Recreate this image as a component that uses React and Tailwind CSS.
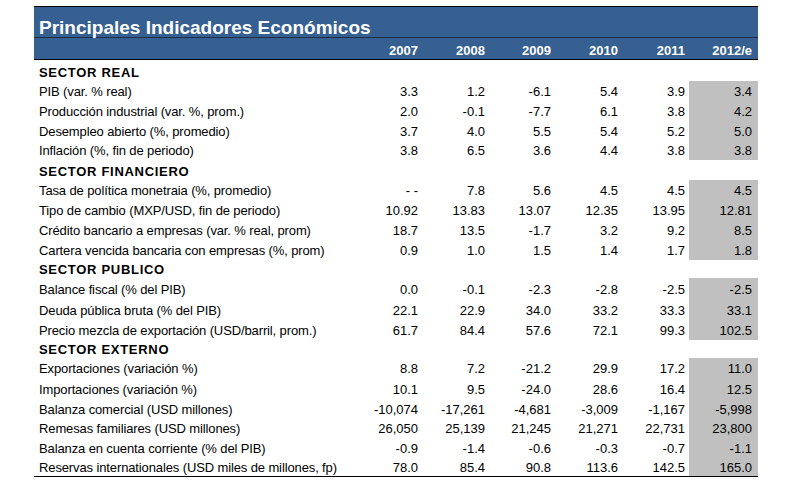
import React from "react";

const years = ["2007", "2008", "2009", "2010", "2011", "2012/e"];

const sections = [
  {
    title: "SECTOR REAL",
    h: "h-[21px]",
    rows: [
      ["PIB (var. % real)", ["3.3", "1.2", "-6.1", "5.4", "3.9", "3.4"], "h-5"],
      ["Producción industrial (var. %, prom.)", ["2.0", "-0.1", "-7.7", "6.1", "3.8", "4.2"], "h-5"],
      ["Desempleo abierto (%, promedio)", ["3.7", "4.0", "5.5", "5.4", "5.2", "5.0"], "h-5"],
      ["Inflación (%, fin de periodo)", ["3.8", "6.5", "3.6", "4.4", "3.8", "3.8"], "h-[19px]"],
    ],
  },
  {
    title: "SECTOR FINANCIERO",
    h: "h-5",
    rows: [
      ["Tasa de política monetraia (%, promedio)", ["- -", "7.8", "5.6", "4.5", "4.5", "4.5"], "h-5"],
      ["Tipo de cambio (MXP/USD, fin de periodo)", ["10.92", "13.83", "13.07", "12.35", "13.95", "12.81"], "h-5"],
      ["Crédito bancario a empresas (var. % real, prom)", ["18.7", "13.5", "-1.7", "3.2", "9.2", "8.5"], "h-5"],
      ["Cartera vencida bancaria con empresas (%, prom)", ["0.9", "1.0", "1.5", "1.4", "1.7", "1.8"], "h-5"],
    ],
  },
  {
    title: "SECTOR PUBLICO",
    h: "h-[18px]",
    rows: [
      ["Balance fiscal (% del PIB)", ["0.0", "-0.1", "-2.3", "-2.8", "-2.5", "-2.5"], "h-[22px]"],
      ["Deuda pública bruta (% del PIB)", ["22.1", "22.9", "34.0", "33.2", "33.3", "33.1"], "h-5"],
      ["Precio mezcla de exportación (USD/barril, prom.)", ["61.7", "84.4", "57.6", "72.1", "99.3", "102.5"], "h-5"],
    ],
  },
  {
    title: "SECTOR EXTERNO",
    h: "h-[18px]",
    rows: [
      ["Exportaciones (variación %)", ["8.8", "7.2", "-21.2", "29.9", "17.2", "11.0"], "h-[21px]"],
      ["Importaciones (variación %)", ["10.1", "9.5", "-24.0", "28.6", "16.4", "12.5"], "h-5"],
      ["Balanza comercial (USD millones)", ["-10,074", "-17,261", "-4,681", "-3,009", "-1,167", "-5,998"], "h-5"],
      ["Remesas familiares (USD millones)", ["26,050", "25,139", "21,245", "21,271", "22,731", "23,800"], "h-[19px]"],
      ["Balanza en cuenta corriente (% del PIB)", ["-0.9", "-1.4", "-0.6", "-0.3", "-0.7", "-1.1"], "h-[21px]"],
      ["Reservas internationales (USD miles de millones, fp)", ["78.0", "85.4", "90.8", "113.6", "142.5", "165.0"], "h-[17px]"],
    ],
  },
];

const cols = "grid grid-cols-[321px_67px_67px_66px_67px_67px_69px]";

function DataRow({ label, values, h }) {
  return (
    <div className={`${cols} ${h}`}>
      <div className="flex items-center pl-[5px] leading-[13px] tracking-[-0.12px]">{label}</div>
      {values.map((v, i) => (
        <div
          key={i}
          className={`flex items-center justify-end leading-[13px] ${
            i === 5 ? "bg-[#c0c0c0] pr-1.5" : "pr-1"
          }`}>
          {v}
        </div>
      ))}
    </div>
  );
}

export default function App() {
  return (
    <div className="w-[798px] h-[485px] bg-white pl-[34px] pt-[6px] font-['Liberation_Sans',Arial,sans-serif] text-black text-[13px]">
      <div className="w-[724px]">
        {/* header */}
        <div className="bg-[#366092] border-t border-black">
          <div className="h-[31px] flex items-end pl-[5px] border-b border-[#1c2f47]">
            <span className="text-white font-bold text-[19px] leading-[19px]">
              Principales Indicadores Económicos
            </span>
          </div>
          <div className={`${cols} h-[22px] border-b border-black`}>
            <div />
            {years.map((y, i) => (
              <div
                key={y}
                className={`flex items-center justify-end pt-[3px] text-white font-bold leading-[13px] ${
                  i === 5 ? "pr-1.5" : "pr-1"
                }`}>
                {y}
              </div>
            ))}
          </div>
        </div>

        {sections.map((s) => (
          <div key={s.title}>
            <div className={`flex items-end pl-[5px] pb-[2px] ${s.h}`}>
              <span className="font-bold tracking-[0.7px] leading-[13px]">
                {s.title}
              </span>
            </div>
            {s.rows.map(([label, values, h]) => (
              <DataRow key={label} label={label} values={values} h={h} />
            ))}
          </div>
        ))}
        <div className="border-t border-black" />
      </div>
    </div>
  );
}
